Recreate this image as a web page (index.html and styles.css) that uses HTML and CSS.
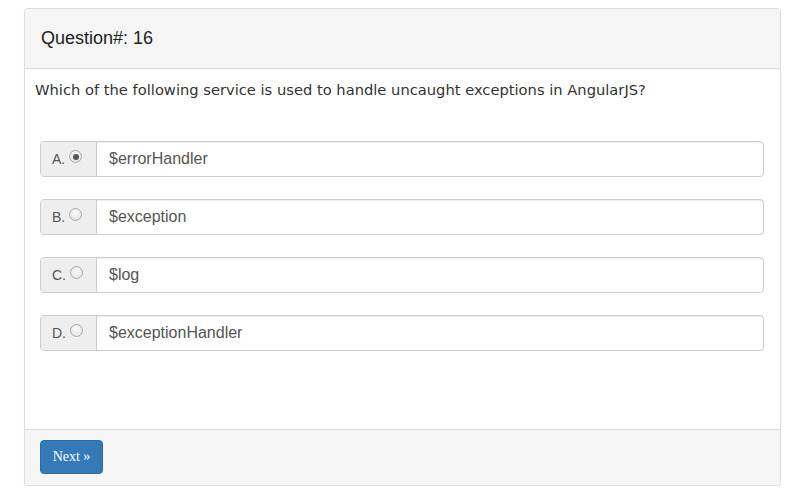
FILE: index.html
```html
<!DOCTYPE html>
<html>
<head>
<meta charset="utf-8">
<link rel="stylesheet" href="styles.css">
</head>
<body>
<div class="panel">
  <div class="panel-heading">Question#: 16</div>
  <div class="panel-body">
    <p class="question">Which of the following service is used to handle uncaught exceptions in AngularJS?</p>
    <div class="options">
      <div class="input-group">
        <span class="addon">A. <span class="radio checked"></span></span>
        <span class="field">$errorHandler</span>
      </div>
      <div class="input-group">
        <span class="addon">B. <span class="radio"></span></span>
        <span class="field">$exception</span>
      </div>
      <div class="input-group">
        <span class="addon">C. <span class="radio"></span></span>
        <span class="field">$log</span>
      </div>
      <div class="input-group">
        <span class="addon">D. <span class="radio"></span></span>
        <span class="field">$exceptionHandler</span>
      </div>
    </div>
  </div>
  <div class="panel-footer">
    <button class="btn">Next »</button>
  </div>
</div>
</body>
</html>
```
FILE: styles.css
```css
html, body { margin: 0; padding: 0; background: #fff; }
body { padding: 8px 8px 0 24px; }
.panel {
  border: 1px solid #ddd;
  border-radius: 4px;
  box-shadow: 0 1px 1px rgba(0,0,0,.05);
  background: #fff;
  height: 478px;
  box-sizing: border-box;
  display: flex;
  flex-direction: column;
}
.panel-heading {
  background: #f5f5f5;
  border-bottom: 1px solid #ddd;
  height: 60px;
  box-sizing: border-box;
  padding: 19px 0 0 16px;
  font-family: "Liberation Sans", Arial, sans-serif;
  font-size: 18px;
  color: #222;
  border-radius: 3px 3px 0 0;
}
.panel-body {
  flex: 1;
  padding: 11px 16px 0 10px;
}
.question {
  margin: 0;
  font-family: "DejaVu Sans", Verdana, sans-serif;
  font-size: 14.7px;
  color: #333;
  line-height: 20px;
  white-space: nowrap;
}
.options {
  padding: 41px 0 0 5px;
  display: flex;
  flex-direction: column;
  gap: 22px;
}
.input-group {
  display: flex;
  height: 36px;
  border: 1px solid #ccc;
  border-radius: 4px;
  box-sizing: border-box;
  box-shadow: inset 0 1px 1px rgba(0,0,0,.075);
  font-family: "Liberation Sans", Arial, sans-serif;
}
.addon {
  width: 56px;
  box-sizing: border-box;
  background: #eee;
  border-right: 1px solid #ccc;
  border-radius: 3px 0 0 3px;
  display: flex;
  align-items: center;
  padding-left: 11px;
  font-size: 14px;
  color: #555;
  gap: 4px;
}
.radio {
  width: 13px;
  height: 13px;
  border-radius: 50%;
  border: 1px solid #aaa;
  background: radial-gradient(circle at 50% 35%, #fafafa, #dedede);
  box-sizing: border-box;
  position: relative;
  margin-top: -5px;
}
.radio.checked::after {
  content: "";
  position: absolute;
  left: 2.5px; top: 2.5px;
  width: 6px; height: 6px;
  border-radius: 50%;
  background: #555;
}
.field {
  flex: 1;
  display: flex;
  align-items: center;
  padding-left: 12px;
  font-size: 16px;
  color: #555;
}
.panel-footer {
  background: #f5f5f5;
  border-top: 1px solid #ddd;
  height: 56px;
  box-sizing: border-box;
  padding: 10px 15px;
  border-radius: 0 0 3px 3px;
}
.btn {
  background: #337ab7;
  border: 1px solid #2e6da4;
  border-radius: 4px;
  color: #fff;
  font-family: "Liberation Serif", "Times New Roman", serif;
  font-size: 14px;
  width: 63px;
  height: 34px;
  padding: 0;
}
```
